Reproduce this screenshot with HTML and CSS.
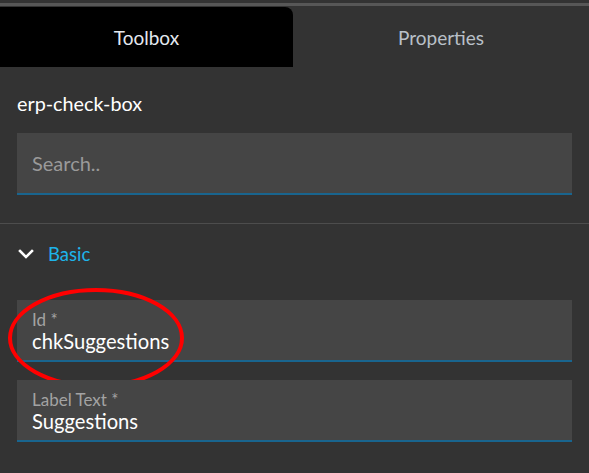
FILE: index.html
```html
<!DOCTYPE html>
<html lang="en">
<head>
  <meta charset="UTF-8" />
  <meta name="viewport" content="width=device-width, initial-scale=1.0"/>
  <title>Toolbox / Properties</title>
  <link rel="stylesheet" href="styles.css">
</head>
<body>
  <div class="panel">
    <div class="top-rule"></div>
    <div class="tabs">
      <div class="tab active">Toolbox</div>
      <div class="tab">Properties</div>
    </div>

    <div class="section">
      <h3 class="comp-name">erp-check-box</h3>
      <div class="field search">
        <span class="placeholder">Search..</span>
      </div>
    </div>

    <div class="divider"></div>

    <div class="section">
      <div class="group-head">
        <svg class="chevron" width="16" height="10" viewBox="0 0 16 10">
          <path d="M2 2 L8 8 L14 2" fill="none" stroke="#fff" stroke-width="2.6" stroke-linecap="square"/>
        </svg>
        <span class="group-title">Basic</span>
      </div>

      <div class="field prop">
        <label>Id *</label>
        <div class="value">chkSuggestions</div>
        <!-- annotation drawn over the first field -->
        <svg class="mark" width="180" height="104" viewBox="0 0 180 104">
          <ellipse cx="90" cy="52" rx="86" ry="48" fill="none" stroke="#f00" stroke-width="4"/>
        </svg>
      </div>

      <div class="field prop">
        <label>Label Text *</label>
        <div class="value">Suggestions</div>
      </div>
    </div>
  </div>
</body>
</html>
```

FILE: styles.css
```css
body { margin: 0; background: #333333; font-family: Lato, "Open Sans", sans-serif; overflow: hidden; }
.panel { height: 473px; padding-top: 3px; box-sizing: border-box; }
.top-rule { height: 3px; background: #575757; }

.tabs { display: flex; height: 60px; margin-top: 1px; }
.tab {
  flex: 1; display: flex; align-items: center; justify-content: center;
  color: #b9c0c8; font-size: 19px;
}
.tab.active { flex: 0 0 293px; background: #000; color: #e4e8ef; border-top-right-radius: 8px; }

.section { padding: 0 17px; }
.comp-name { margin: 24px 0 0; height: 24px; line-height: 24px; font-size: 19.8px; font-weight: normal; color: #fff; }

.field {
  position: relative; background: #454545;
  border-bottom: 2px solid #19658f;
}
.search { height: 60px; margin-top: 18px; display: flex; align-items: center; padding-left: 15px; }
.placeholder { color: #9a9a9a; font-size: 20px; }

.divider { height: 1px; background: #4d4d4d; margin-top: 28px; }

.group-head { display: flex; align-items: center; height: 24px; margin-top: 18px; }
.chevron { margin-left: 1px; }
.group-title { margin-left: 14px; color: #1eb4ea; font-size: 18.5px; }

.prop { height: 60px; padding-left: 15px; margin-top: 34px; }
.prop + .prop { margin-top: 18px; }
.prop label { display: block; padding-top: 10px; height: 19px; line-height: 19px; color: #a3a3a3; font-size: 17px; }
.prop .value { height: 24px; line-height: 24px; color: #fff; font-size: 20.2px; }

.mark { position: absolute; left: -11px; top: -14px; }
```
